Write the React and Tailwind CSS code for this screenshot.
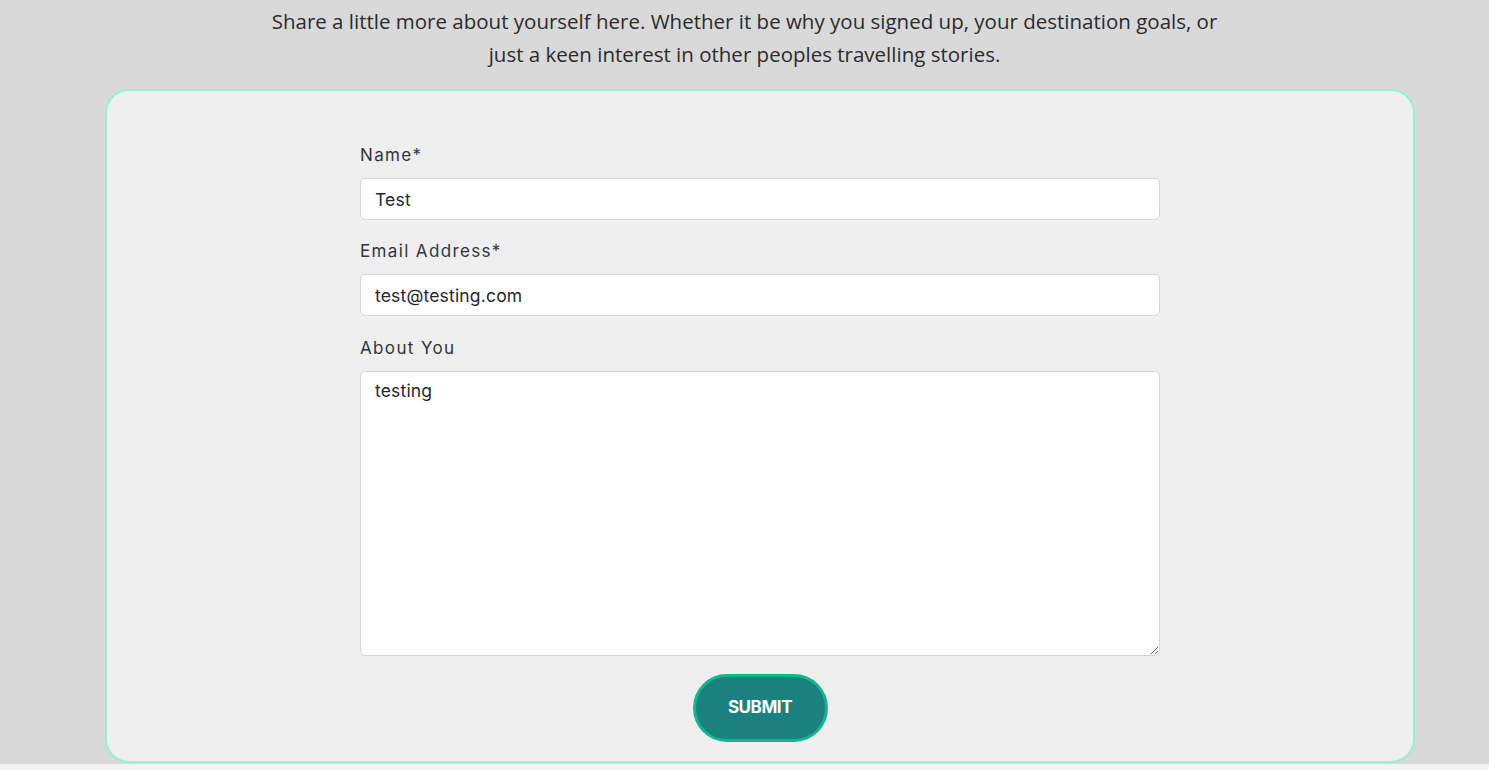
import { useState } from 'react';

const labelClass = "block text-[17px] leading-6 tracking-[0.08em] text-[#2f3540] mb-[11px]";
const inputClass =
  "block w-full h-[42px] px-[14px] bg-white border border-[#d1d5db] rounded-[5px] text-[17.5px] tracking-[0.01em] text-[#1f2733] outline-none";

const App = () => {
  const [name, setName] = useState('Test');
  const [email, setEmail] = useState('test@testing.com');
  const [about, setAbout] = useState('testing');

  return (
    <div className="min-h-screen bg-[#f4f4f4] font-['Inter',sans-serif]">
      <div className="bg-[#d9d9d9] pb-px">
        {/* Intro */}
        <p className="mx-auto max-w-[960px] text-center text-[20.5px] leading-[33px] text-[#2b2b2b] pt-[5px] font-['Open_Sans','Noto_Sans',sans-serif]">
          Share a little more about yourself here. Whether it be why you signed up, your destination goals, or
          <br />
          just a keen interest in other peoples travelling stories.
        </p>

        {/* Card */}
        <div className="ml-[105px] w-[1310px] mt-[18px] bg-[#efefef] border-2 border-[#93f3cf] rounded-[24px] pt-[52px] pb-[19px]">
          <form className="w-[800px] mx-auto" onSubmit={(e) => e.preventDefault()}>
            <label className={labelClass}>Name*</label>
            <input className={inputClass} value={name} onChange={(e) => setName(e.target.value)} />

            <label className={labelClass + " mt-[19px]"}>Email Address*</label>
            <input className={inputClass} value={email} onChange={(e) => setEmail(e.target.value)} />

            <label className={labelClass + " mt-[20px]"}>About You</label>
            <textarea
              className="block w-full h-[285px] px-[14px] py-[7px] bg-white border border-[#d1d5db] rounded-[5px] text-[17.5px] tracking-[0.01em] leading-6 text-[#1f2733] outline-none"
              value={about}
              onChange={(e) => setAbout(e.target.value)}
            />

            <div className="flex justify-center mt-[18px]">
              <button
                type="submit"
                className="w-[135px] h-[68px] rounded-full bg-[#1a8080] border-[3px] border-[#13b68b] text-white font-bold text-[17px] tracking-tight"
              >
                SUBMIT
              </button>
            </div>
          </form>
        </div>
      </div>
    </div>
  );
};

export default App;
